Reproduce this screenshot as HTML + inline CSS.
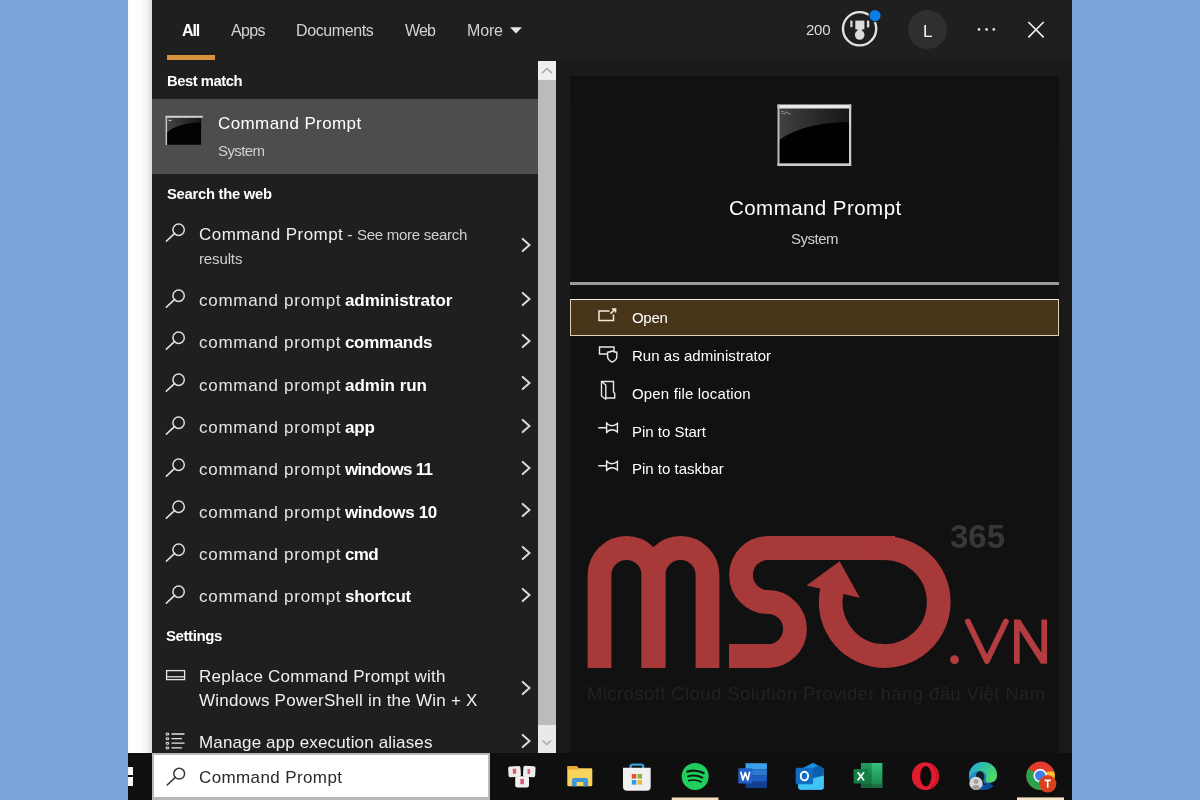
<!DOCTYPE html>
<html>
<head>
<meta charset="utf-8">
<title>Search</title>
<style>
*{margin:0;padding:0;box-sizing:border-box}
html,body{width:1200px;height:800px;overflow:hidden}
body{background:#7ba3da;font-family:"Liberation Sans",sans-serif;position:relative;color:#fff}
.abs{position:absolute}
.t{position:absolute;z-index:2;will-change:transform;white-space:nowrap;line-height:1;transform-origin:0 0}
#white{left:127.6px;top:0;width:24.4px;height:753.2px;background:linear-gradient(90deg,#f3f6fb 0,#fefefe 12%,#fdfdfd 55%,#f1f1f1 82%,#d9d9d9 100%)}
#panel{left:152px;top:0;width:919.8px;height:753.2px;background:#1f1f1f}
#rightbg{left:556px;top:56px;width:515.8px;height:697.2px;background:linear-gradient(180deg,#1f1f1f 0,#1a1a1a 8px,#191919 100%)}
#inner{left:570.3px;top:75.6px;width:488.6px;height:677.6px;background:#111111}
#taskbar{z-index:3;left:127.6px;top:753.2px;width:944.2px;height:46.8px;background:#0f0f0f}
#sel{left:152px;top:98.8px;width:385.6px;height:74.9px;background:#4d4d4d}
#sb{left:537.6px;top:61px;width:18.8px;height:692px;background:#bbbbbb}
#sbup{left:537.6px;top:61px;width:18.8px;height:19px;background:#eeeeee}
#sbdn{left:537.6px;top:725px;width:18.8px;height:28px;background:#e9e9e9}
#underline{left:167px;top:55px;width:48px;height:5px;background:#d8933a}
.tab{font-size:16px;color:#d0d0d0;top:22px}
.hd{font-size:15px;font-weight:bold;color:#fff}
.row{font-size:17px;color:#e6e6e6}
.row b{color:#fff}
.act{font-size:15px;color:#fff;left:632px}
#sep{left:570.3px;top:282.2px;width:488.6px;height:2.5px;background:#9a9a9a}
#openbtn{left:570.3px;top:299px;width:488.6px;height:37.3px;background:#483419;border:1px solid #ddd1b8;border-top-color:#ecebe6}
#search{z-index:3;left:152px;top:753px;width:338px;height:47px;background:#fff;border:2px solid #b9b9b9;border-bottom:3px solid #b9b9b9}
</style>
</head>
<body>
<div class="abs" id="white"></div>
<div class="abs" id="panel"></div>
<div class="abs" id="rightbg"></div>
<div class="abs" id="inner"></div>
<div class="abs" id="taskbar"></div>
<div class="abs" id="sel"></div>
<div class="abs" id="sb"></div>
<div class="abs" id="sbup"></div>
<div class="abs" id="sbdn"></div>
<div class="abs" id="underline"></div>
<div class="abs" id="sep"></div>
<div class="abs" id="openbtn"></div>
<div class="abs" id="search"></div>

<!-- MISC-START -->
<div class="t" style="left:181.7px;top:23.0px;font-size:16px;letter-spacing:-1.072px;font-weight:bold;color:#ffffff">All</div>
<div class="t" style="left:230.7px;top:23.0px;font-size:16px;letter-spacing:-0.623px;color:#d2d2d2">Apps</div>
<div class="t" style="left:296.0px;top:23.0px;font-size:16px;letter-spacing:-0.403px;color:#d2d2d2">Documents</div>
<div class="t" style="left:405.0px;top:23.0px;font-size:16px;letter-spacing:-0.805px;color:#d2d2d2">Web</div>
<div class="t" style="left:466.7px;top:23.0px;font-size:16px;letter-spacing:-0.152px;color:#d2d2d2">More</div>
<div class="t" style="left:166.5px;top:74.0px;font-size:14.8px;letter-spacing:-0.476px;font-weight:bold;color:#ffffff">Best match</div>
<div class="t" style="left:218.3px;top:115.0px;font-size:17px;letter-spacing:0.405px;color:#ffffff">Command Prompt</div>
<div class="t" style="left:218.3px;top:143.0px;font-size:15px;letter-spacing:-0.602px;color:#d0d0d0">System</div>
<div class="t" style="left:166.5px;top:187.0px;font-size:14.8px;letter-spacing:-0.275px;font-weight:bold;color:#ffffff">Search the web</div>
<div class="t" style="left:806.0px;top:22.0px;font-size:15px;letter-spacing:-0.264px;color:#dcdcdc">200</div>
<div class="t" style="left:923.4px;top:23.0px;font-size:17px;letter-spacing:0.000px;color:#f4f4f4">L</div>
<div class="t" style="left:728.7px;top:198.0px;font-size:20.5px;letter-spacing:0.451px;color:#ffffff">Command Prompt</div>
<div class="t" style="left:791.0px;top:231.0px;font-size:15px;letter-spacing:-0.482px;color:#cfcfcf">System</div>
<div class="t" style="left:631.6px;top:310.0px;font-size:15px;letter-spacing:-0.298px;color:#ffffff">Open</div>
<div class="t" style="left:631.6px;top:348.0px;font-size:15px;letter-spacing:0.037px;color:#ffffff">Run as administrator</div>
<div class="t" style="left:631.6px;top:386.0px;font-size:15px;letter-spacing:0.158px;color:#ffffff">Open file location</div>
<div class="t" style="left:631.6px;top:424.0px;font-size:15px;letter-spacing:-0.018px;color:#ffffff">Pin to Start</div>
<div class="t" style="left:631.6px;top:461.0px;font-size:15px;letter-spacing:0.006px;color:#ffffff">Pin to taskbar</div>
<div class="t" style="left:198.9px;top:769.0px;font-size:17px;letter-spacing:0.389px;color:#2a2a2a;z-index:4">Command Prompt</div>
<!-- MISC-END -->
<!-- LEFTROWS-START -->
<!-- row 0 -->
<div class="t" style="left:198.9px;top:226.0px;font-size:17px;letter-spacing:0.451px;color:#f0f0f0">Command Prompt</div>
<div class="t" style="left:346.7px;top:226.0px;font-size:17px;letter-spacing:0.000px;color:#d0d0d0">-</div>
<div class="t" style="left:357.3px;top:227.0px;font-size:15px;letter-spacing:-0.273px;color:#cfcfcf">See more search</div>
<div class="t" style="left:198.9px;top:251.0px;font-size:15px;letter-spacing:-0.130px;color:#cfcfcf">results</div>
<svg class="abs" style="left:164px;top:219.6px" width="24" height="24" viewBox="0 0 24 24"><circle cx="14.6" cy="9.7" r="5.7" fill="none" stroke="#e0e0e0" stroke-width="1.5"/><path d="M10.7 13.4L2.4 21.1" stroke="#e0e0e0" stroke-width="1.6" stroke-linecap="round"/></svg>
<svg class="abs" style="left:519px;top:236.3px" width="14" height="18" viewBox="0 0 14 18"><path d="M3.7 2.9L10.5 9L3.7 15.1" fill="none" stroke="#dadada" stroke-width="2" stroke-linecap="round"/></svg>
<!-- administrator -->
<div class="t" style="left:198.9px;top:292.0px;font-size:17px;letter-spacing:0.717px;color:#e4e4e4">command prompt</div>
<div class="t" style="left:345.3px;top:292.0px;font-size:17px;letter-spacing:-0.103px;font-weight:bold;color:#ffffff">administrator</div>
<svg class="abs" style="left:164px;top:285.6px" width="24" height="24" viewBox="0 0 24 24"><circle cx="14.6" cy="9.7" r="5.7" fill="none" stroke="#e0e0e0" stroke-width="1.5"/><path d="M10.7 13.4L2.4 21.1" stroke="#e0e0e0" stroke-width="1.6" stroke-linecap="round"/></svg>
<svg class="abs" style="left:519px;top:289.7px" width="14" height="18" viewBox="0 0 14 18"><path d="M3.7 2.9L10.5 9L3.7 15.1" fill="none" stroke="#dadada" stroke-width="2" stroke-linecap="round"/></svg>
<!-- commands -->
<div class="t" style="left:198.9px;top:334.0px;font-size:17px;letter-spacing:0.717px;color:#e4e4e4">command prompt</div>
<div class="t" style="left:345.3px;top:334.0px;font-size:17px;letter-spacing:-0.336px;font-weight:bold;color:#ffffff">commands</div>
<svg class="abs" style="left:164px;top:327.9px" width="24" height="24" viewBox="0 0 24 24"><circle cx="14.6" cy="9.7" r="5.7" fill="none" stroke="#e0e0e0" stroke-width="1.5"/><path d="M10.7 13.4L2.4 21.1" stroke="#e0e0e0" stroke-width="1.6" stroke-linecap="round"/></svg>
<svg class="abs" style="left:519px;top:332.0px" width="14" height="18" viewBox="0 0 14 18"><path d="M3.7 2.9L10.5 9L3.7 15.1" fill="none" stroke="#dadada" stroke-width="2" stroke-linecap="round"/></svg>
<!-- admin run -->
<div class="t" style="left:198.9px;top:377.0px;font-size:17px;letter-spacing:0.717px;color:#e4e4e4">command prompt</div>
<div class="t" style="left:345.3px;top:377.0px;font-size:17px;letter-spacing:-0.021px;font-weight:bold;color:#ffffff">admin run</div>
<svg class="abs" style="left:164px;top:370.3px" width="24" height="24" viewBox="0 0 24 24"><circle cx="14.6" cy="9.7" r="5.7" fill="none" stroke="#e0e0e0" stroke-width="1.5"/><path d="M10.7 13.4L2.4 21.1" stroke="#e0e0e0" stroke-width="1.6" stroke-linecap="round"/></svg>
<svg class="abs" style="left:519px;top:374.4px" width="14" height="18" viewBox="0 0 14 18"><path d="M3.7 2.9L10.5 9L3.7 15.1" fill="none" stroke="#dadada" stroke-width="2" stroke-linecap="round"/></svg>
<!-- app -->
<div class="t" style="left:198.9px;top:419.0px;font-size:17px;letter-spacing:0.717px;color:#e4e4e4">command prompt</div>
<div class="t" style="left:345.3px;top:419.0px;font-size:17px;letter-spacing:-0.112px;font-weight:bold;color:#ffffff">app</div>
<svg class="abs" style="left:164px;top:412.6px" width="24" height="24" viewBox="0 0 24 24"><circle cx="14.6" cy="9.7" r="5.7" fill="none" stroke="#e0e0e0" stroke-width="1.5"/><path d="M10.7 13.4L2.4 21.1" stroke="#e0e0e0" stroke-width="1.6" stroke-linecap="round"/></svg>
<svg class="abs" style="left:519px;top:416.7px" width="14" height="18" viewBox="0 0 14 18"><path d="M3.7 2.9L10.5 9L3.7 15.1" fill="none" stroke="#dadada" stroke-width="2" stroke-linecap="round"/></svg>
<!-- windows 11 -->
<div class="t" style="left:198.9px;top:461.0px;font-size:17px;letter-spacing:0.717px;color:#e4e4e4">command prompt</div>
<div class="t" style="left:345.3px;top:461.0px;font-size:17px;letter-spacing:-0.719px;font-weight:bold;color:#ffffff">windows 11</div>
<svg class="abs" style="left:164px;top:454.9px" width="24" height="24" viewBox="0 0 24 24"><circle cx="14.6" cy="9.7" r="5.7" fill="none" stroke="#e0e0e0" stroke-width="1.5"/><path d="M10.7 13.4L2.4 21.1" stroke="#e0e0e0" stroke-width="1.6" stroke-linecap="round"/></svg>
<svg class="abs" style="left:519px;top:459.0px" width="14" height="18" viewBox="0 0 14 18"><path d="M3.7 2.9L10.5 9L3.7 15.1" fill="none" stroke="#dadada" stroke-width="2" stroke-linecap="round"/></svg>
<!-- windows 10 -->
<div class="t" style="left:198.9px;top:504.0px;font-size:17px;letter-spacing:0.717px;color:#e4e4e4">command prompt</div>
<div class="t" style="left:345.3px;top:504.0px;font-size:17px;letter-spacing:-0.357px;font-weight:bold;color:#ffffff">windows 10</div>
<svg class="abs" style="left:164px;top:497.3px" width="24" height="24" viewBox="0 0 24 24"><circle cx="14.6" cy="9.7" r="5.7" fill="none" stroke="#e0e0e0" stroke-width="1.5"/><path d="M10.7 13.4L2.4 21.1" stroke="#e0e0e0" stroke-width="1.6" stroke-linecap="round"/></svg>
<svg class="abs" style="left:519px;top:501.4px" width="14" height="18" viewBox="0 0 14 18"><path d="M3.7 2.9L10.5 9L3.7 15.1" fill="none" stroke="#dadada" stroke-width="2" stroke-linecap="round"/></svg>
<!-- cmd -->
<div class="t" style="left:198.9px;top:546.0px;font-size:17px;letter-spacing:0.717px;color:#e4e4e4">command prompt</div>
<div class="t" style="left:345.3px;top:546.0px;font-size:17px;letter-spacing:-0.627px;font-weight:bold;color:#ffffff">cmd</div>
<svg class="abs" style="left:164px;top:539.6px" width="24" height="24" viewBox="0 0 24 24"><circle cx="14.6" cy="9.7" r="5.7" fill="none" stroke="#e0e0e0" stroke-width="1.5"/><path d="M10.7 13.4L2.4 21.1" stroke="#e0e0e0" stroke-width="1.6" stroke-linecap="round"/></svg>
<svg class="abs" style="left:519px;top:543.7px" width="14" height="18" viewBox="0 0 14 18"><path d="M3.7 2.9L10.5 9L3.7 15.1" fill="none" stroke="#dadada" stroke-width="2" stroke-linecap="round"/></svg>
<!-- shortcut -->
<div class="t" style="left:198.9px;top:588.0px;font-size:17px;letter-spacing:0.717px;color:#e4e4e4">command prompt</div>
<div class="t" style="left:345.3px;top:588.0px;font-size:17px;letter-spacing:-0.258px;font-weight:bold;color:#ffffff">shortcut</div>
<svg class="abs" style="left:164px;top:581.9px" width="24" height="24" viewBox="0 0 24 24"><circle cx="14.6" cy="9.7" r="5.7" fill="none" stroke="#e0e0e0" stroke-width="1.5"/><path d="M10.7 13.4L2.4 21.1" stroke="#e0e0e0" stroke-width="1.6" stroke-linecap="round"/></svg>
<svg class="abs" style="left:519px;top:586.0px" width="14" height="18" viewBox="0 0 14 18"><path d="M3.7 2.9L10.5 9L3.7 15.1" fill="none" stroke="#dadada" stroke-width="2" stroke-linecap="round"/></svg>
<!-- settings -->
<div class="t" style="left:166.0px;top:628.0px;font-size:15px;letter-spacing:-0.411px;font-weight:bold;color:#ffffff">Settings</div>
<div class="t" style="left:198.9px;top:668.0px;font-size:17px;letter-spacing:0.247px;color:#f0f0f0">Replace Command Prompt with</div>
<div class="t" style="left:198.9px;top:692.0px;font-size:17px;letter-spacing:0.241px;color:#f0f0f0">Windows PowerShell in the Win + X</div>
<svg class="abs" style="left:519px;top:678.5px" width="14" height="18" viewBox="0 0 14 18"><path d="M3.7 2.9L10.5 9L3.7 15.1" fill="none" stroke="#dadada" stroke-width="2" stroke-linecap="round"/></svg>
<div class="t" style="left:198.9px;top:734.0px;font-size:17px;letter-spacing:0.138px;color:#f0f0f0">Manage app execution aliases</div>
<svg class="abs" style="left:519px;top:732.2px" width="14" height="18" viewBox="0 0 14 18"><path d="M3.7 2.9L10.5 9L3.7 15.1" fill="none" stroke="#dadada" stroke-width="2" stroke-linecap="round"/></svg>
<!-- LEFTROWS-END -->
<!-- ICONS -->
<!-- more caret -->
<svg class="abs" style="left:509px;top:26px" width="14" height="9" viewBox="0 0 14 9"><path d="M1 1.3H13L7 7.6Z" fill="#e6e6e6"/></svg>
<!-- small cmd icon -->
<svg class="abs" style="left:165.3px;top:115.3px" width="40" height="33" viewBox="0 0 40 33">
<defs><linearGradient id="g1" x1="0" y1="0" x2="1" y2="0"><stop offset="0" stop-color="#444"/><stop offset="1" stop-color="#161616"/></linearGradient></defs>
<rect x="1.5" y="1.5" width="34.6" height="28.2" fill="#020202"/>
<path d="M1.5 2H36.1V7.6C22 8 8 11 1.5 18Z" fill="url(#g1)"/>
<rect x="0.6" y="0.8" width="37.1" height="2" fill="#d2d2d2"/>
<rect x="0.6" y="0.8" width="1.5" height="29.2" fill="#c2c2c2"/>
<rect x="3.5" y="4.8" width="3" height="1" fill="#ddd"/>
</svg>
<!-- large cmd icon -->
<svg class="abs" style="left:777px;top:104px" width="76" height="64" viewBox="0 0 76 64">
<defs><linearGradient id="g2" x1="0" y1="0" x2="1" y2="0"><stop offset="0" stop-color="#424242"/><stop offset="0.6" stop-color="#262626"/><stop offset="1" stop-color="#161616"/></linearGradient></defs>
<rect x="1" y="1" width="73" height="60.5" fill="#010101"/>
<path d="M1 3H74V18.2C52 18 22 21 1 37Z" fill="url(#g2)"/>
<rect x="0.5" y="0.5" width="73.7" height="4" fill="#e9e9e9"/>
<rect x="0.5" y="0.5" width="2" height="61.5" fill="#bdbdbd"/>
<rect x="72" y="0.5" width="2.2" height="61.5" fill="#cfcfcf"/>
<rect x="0.5" y="59.3" width="73.7" height="2.7" fill="#c9c9c9"/>
<path d="M4.5 7.5h2M4.5 9.5h2M7.5 10.5l1.5-3M9.5 8l4 2.5" stroke="#9a9a9a" stroke-width="1" fill="none"/>
</svg>
<!-- trophy / rewards -->
<svg class="abs" style="left:838px;top:7px" width="46" height="44" viewBox="0 0 46 44">
<circle cx="21.6" cy="21.75" r="16.6" fill="none" stroke="#e2e2e2" stroke-width="2.4"/>
<rect x="17.3" y="13.6" width="9.1" height="8.8" fill="#dcdcdc"/>
<rect x="12.3" y="13.6" width="2.2" height="6.6" fill="#dcdcdc"/>
<rect x="28.9" y="13.6" width="2.4" height="6.8" fill="#dcdcdc"/>
<rect x="19.6" y="22" width="4.4" height="3" fill="#dcdcdc"/>
<circle cx="21.7" cy="28" r="4.8" fill="#dcdcdc"/>
<circle cx="37" cy="8.6" r="6.6" fill="#1f1f1f"/>
<circle cx="37" cy="8.6" r="5.6" fill="#0c7ce6"/>
</svg>
<!-- L avatar -->
<div class="abs" style="left:908px;top:10px;width:39px;height:39px;border-radius:50%;background:#2f2f2f"></div>
<!-- dots -->
<svg class="abs" style="left:975px;top:26px" width="24" height="8" viewBox="0 0 24 8"><circle cx="4" cy="3.4" r="1.35" fill="#e6e6e6"/><circle cx="11.6" cy="3.4" r="1.35" fill="#e6e6e6"/><circle cx="18.8" cy="3.4" r="1.35" fill="#e6e6e6"/></svg>
<!-- close X -->
<svg class="abs" style="left:1026px;top:20px" width="20" height="20" viewBox="0 0 20 20"><path d="M2.3 2L17.7 17.4M17.7 2L2.3 17.4" stroke="#ececec" stroke-width="1.7" fill="none"/></svg>
<!-- scrollbar arrows -->
<svg class="abs" style="left:540px;top:65px" width="14" height="12" viewBox="0 0 14 12"><path d="M2.2 8L7 3.6L11.8 8" fill="none" stroke="#9d9d9d" stroke-width="1.4"/></svg>
<svg class="abs" style="left:540px;top:737px" width="14" height="12" viewBox="0 0 14 12"><path d="M2.6 3.6L6.8 7.6L11 3.6" fill="none" stroke="#a6a6a6" stroke-width="1.4"/></svg>
<!-- action icons -->
<svg class="abs" style="left:596px;top:306px" width="24" height="18" viewBox="0 0 24 18"><path d="M13.5 5H3V14.6H17.5V8.6" fill="none" stroke="#f3e9dc" stroke-width="1.5"/><path d="M14.5 7.6L19.4 3.1M15.9 2.9H19.6V6.6" fill="none" stroke="#f3e9dc" stroke-width="1.5"/></svg>
<svg class="abs" style="left:596px;top:344px" width="24" height="22" viewBox="0 0 24 22"><path d="M18 7V3H3.5V10H11" fill="none" stroke="#e8e8e8" stroke-width="1.4"/><path d="M11.6 8.2C13.6 8.2 15 7.6 16.2 7C17.4 7.6 18.8 8.2 20.8 8.2V12.5C20.8 15 18.6 17 16.2 18C13.8 17 11.6 15 11.6 12.5Z" fill="none" stroke="#e8e8e8" stroke-width="1.4"/></svg>
<svg class="abs" style="left:598px;top:378px" width="20" height="24" viewBox="0 0 20 24"><path d="M3.5 3.5H15.5V14L16.7 15.2V20H8" fill="none" stroke="#e8e8e8" stroke-width="1.4"/><path d="M3.5 3.5L7.8 7V21.3L3.5 18Z" fill="none" stroke="#e8e8e8" stroke-width="1.4" stroke-linejoin="round"/></svg>
<svg class="abs" style="left:596px;top:418px" width="24" height="18" viewBox="0 0 24 18"><path d="M2.3 9.7H10.6M10.6 4.2V15.3M10.6 4.9C12.3 7.3 14 7.7 16 7.7C18 7.7 19.6 7 21.4 5.4V14.1C19.6 12.5 18 11.8 16 11.8C14 11.8 12.3 12.2 10.6 14.6" fill="none" stroke="#ececec" stroke-width="1.4"/></svg>
<svg class="abs" style="left:596px;top:455.6px" width="24" height="18" viewBox="0 0 24 18"><path d="M2.3 9.7H10.6M10.6 4.2V15.3M10.6 4.9C12.3 7.3 14 7.7 16 7.7C18 7.7 19.6 7 21.4 5.4V14.1C19.6 12.5 18 11.8 16 11.8C14 11.8 12.3 12.2 10.6 14.6" fill="none" stroke="#ececec" stroke-width="1.4"/></svg>
<!-- settings row icons -->
<svg class="abs" style="left:165px;top:668px" width="22" height="14" viewBox="0 0 22 14"><rect x="1.6" y="2.6" width="18" height="9" fill="none" stroke="#e4e4e4" stroke-width="1.3"/><path d="M1.6 8.8H19.6" stroke="#e4e4e4" stroke-width="1.3"/></svg>
<svg class="abs" style="left:165px;top:731px" width="22" height="20" viewBox="0 0 22 20"><path d="M6.5 3H19.5M6.5 7.6H17M6.5 12.2H19.5M6.5 16.8H17" stroke="#e4e4e4" stroke-width="1.3"/><path d="M1.2 2.2h2.4v1.8h-2.4zM1.2 6.8h2.4v1.8h-2.4zM1.2 11.4h2.4v1.8h-2.4zM1.2 16h2.4v1.8h-2.4z" fill="none" stroke="#e4e4e4" stroke-width="1"/></svg>
<!-- search box icon -->
<svg class="abs" style="z-index:4;left:164.7px;top:764.4px" width="24" height="24" viewBox="0 0 24 24"><circle cx="14.2" cy="9.7" r="5.4" fill="none" stroke="#3a3a3a" stroke-width="1.5"/><path d="M10.3 13.4L2.2 21" stroke="#3a3a3a" stroke-width="1.6" stroke-linecap="round"/></svg>
<!-- windows logo sliver -->
<div class="abs" style="z-index:4;left:127.6px;top:766.9px;width:5.8px;height:8.3px;background:#f6f6f6"></div>
<div class="abs" style="z-index:4;left:127.6px;top:776.6px;width:5.8px;height:9.2px;background:#f6f6f6"></div>
<!-- LOGO -->
<svg class="abs" style="left:570px;top:500px" width="489" height="230" viewBox="570 500 489 230">
<g fill="none" stroke="#a83939" stroke-width="23.8">
<path d="M599.5 668V575A27 27 0 0 1 653.5 575V668"/>
<path d="M653.5 668V575A27 27 0 0 1 707.5 575V668"/>
<path d="M895 548H768A27 27 0 0 0 768 602A27 27 0 0 1 768 656H729"/>
<path d="M878 548.45A54 54 0 1 1 832.3 589"/>
</g>
<path d="M839.6 561.2L806.5 585.4L859.8 597.8Z" fill="#a83939"/>
<circle cx="954.5" cy="659.7" r="4.4" fill="#b23c40"/>
<path d="M967.9 621.4L986.9 661.1L1005.9 621.4" fill="none" stroke="#b23c40" stroke-width="5.8" stroke-linecap="round" stroke-linejoin="round"/>
<path d="M1014 619.8Q1014 619.4 1014.4 619.4H1020.2L1041.4 652.8V619.4H1047.1V663.8H1040.9L1019.7 630.4V663.8H1014Z" fill="#b23c40"/>
</svg>
<div class="t" style="left:949.5px;top:519.5px;font-size:33px;font-weight:bold;color:#373737;letter-spacing:0px">365</div>
<div class="t" style="left:587px;top:685px;font-size:18.5px;color:#222222;letter-spacing:0.41px">Microsoft Cloud Solution Provider hàng đầu Việt Nam</div>
<!-- TASKBAR ICONS -->
<svg class="abs" style="z-index:4;left:490px;top:753px" width="582" height="47" viewBox="490 753 582 47">
<!-- keys icon -->
<g>
<rect x="508.3" y="766.3" width="12.4" height="10.8" rx="1.8" fill="#ececec" transform="rotate(-3 514 771)"/>
<rect x="523.2" y="766" width="12.2" height="11" rx="1.8" fill="#ededed" transform="rotate(3 529 771)"/>
<rect x="515.2" y="776.2" width="13.8" height="11.2" rx="1.8" fill="#f1f1f1"/>
<rect x="512.8" y="768.8" width="3.4" height="5" fill="#e0566a"/>
<rect x="527.5" y="769" width="2.6" height="5" fill="#e0677a"/>
<rect x="520.3" y="779" width="3.6" height="5.2" fill="#de5a6e"/>
</g>
<!-- folder -->
<g>
<path d="M567.3 767.3Q567.3 766 568.6 766H576.6L578.6 768.2H591Q592.3 768.2 592.3 769.5V785Q592.3 786.3 591 786.3H568.6Q567.3 786.3 567.3 785Z" fill="#f7d25c"/>
<path d="M567.3 767.3Q567.3 766 568.6 766H576.6L578.6 768.2L577.6 769.6H567.3Z" fill="#e7a92f"/>
<path d="M572 786.3V780Q572 778 574 778H586Q588 778 588 780V786.3H583.4V782H576.6V786.3Z" fill="#3f95d6"/>
</g>
<!-- store -->
<g>
<path d="M630.6 769V766.6Q630.6 764.6 632.6 764.6H641.2Q643.2 764.6 643.2 766.6V769" fill="none" stroke="#3b9ad8" stroke-width="2.4"/>
<path d="M623 767.8H650.7V786.7Q650.7 790.7 646.7 790.7H627Q623 790.7 623 786.7Z" fill="#f0f0f0"/>
<rect x="631.8" y="774" width="4.5" height="4.6" fill="#e8502a"/>
<rect x="637.5" y="774" width="4.5" height="4.6" fill="#7bb83c"/>
<rect x="631.8" y="780" width="4.5" height="4.6" fill="#2e9bdc"/>
<rect x="637.5" y="780" width="4.5" height="4.6" fill="#f3b32c"/>
</g>
<!-- spotify -->
<g>
<circle cx="695.2" cy="776.4" r="13.5" fill="#1fce5c"/>
<path d="M687.3 771.6Q695.5 769 703.6 773" fill="none" stroke="#0f1a12" stroke-width="2.3" stroke-linecap="round"/>
<path d="M688 776.3Q695.4 774.2 702.4 777.6" fill="none" stroke="#0f1a12" stroke-width="1.9" stroke-linecap="round"/>
<path d="M688.8 780.6Q695.2 779 701 781.8" fill="none" stroke="#0f1a12" stroke-width="1.6" stroke-linecap="round"/>
<rect x="671.7" y="797.5" width="46.8" height="2.5" fill="#f6dec2"/>
</g>
<!-- word -->
<g>
<rect x="745.5" y="763.2" width="21.4" height="6.3" fill="#3d9fea"/>
<rect x="745.5" y="769.4" width="21.4" height="6.3" fill="#2a7ad2"/>
<rect x="745.5" y="775.6" width="21.4" height="6.3" fill="#1a5dbe"/>
<rect x="745.5" y="781.8" width="21.4" height="6.3" fill="#123f92"/>
<rect x="738.3" y="768.2" width="14" height="15.3" rx="1.2" fill="#2360c5"/>
<path d="M740.8 771.8L742.9 780L745.3 772.6L747.7 780L749.8 771.8" fill="none" stroke="#fff" stroke-width="1.7" stroke-linejoin="round"/>
</g>
<!-- outlook -->
<g>
<path d="M803 768L813 762.8L823.8 768.5V787Q823.8 789.8 821 789.8H801Q798.2 789.8 798.2 787V782Z" fill="#1c8fe0"/>
<path d="M812.5 768L819 765.5L823.8 768.5V776L812.5 779Z" fill="#0b5fae"/>
<path d="M798.2 782L823.8 775.5V787Q823.8 789.8 821 789.8H801Q798.2 789.8 798.2 787Z" fill="#3fc4f4"/>
<rect x="795.7" y="767.7" width="17.3" height="16.6" rx="1.4" fill="#0f6dc4"/>
<ellipse cx="804.4" cy="776" rx="3.7" ry="4.3" fill="none" stroke="#fff" stroke-width="1.9"/>
</g>
<!-- excel -->
<g>
<defs><linearGradient id="xg1" x1="0" y1="0" x2="0" y2="1"><stop offset="0" stop-color="#34c07e"/><stop offset="0.55" stop-color="#21a060"/><stop offset="1" stop-color="#197a45"/></linearGradient>
<linearGradient id="xg2" x1="0" y1="0" x2="0" y2="1"><stop offset="0" stop-color="#249f62"/><stop offset="0.5" stop-color="#15803f"/><stop offset="1" stop-color="#17693a"/></linearGradient></defs>
<rect x="861" y="763" width="11" height="25" fill="url(#xg2)"/>
<rect x="871.7" y="763" width="10.7" height="25" fill="url(#xg1)"/>
<rect x="861" y="784.5" width="21.4" height="3.5" fill="#185c37" opacity="0.55"/>
<rect x="853.6" y="769" width="14.4" height="14.4" rx="1.2" fill="#137c43"/>
<path d="M857.6 772.2L864 780.4M864 772.2L857.6 780.4" stroke="#e9f7ee" stroke-width="1.8"/>
</g>
<!-- opera -->
<g>
<ellipse cx="925.5" cy="776.2" rx="13.6" ry="14" fill="#e11b30"/>
<ellipse cx="925.8" cy="776.2" rx="5.6" ry="10.2" fill="#12090a"/>
<path d="M931 764.5Q937 769 937 776.2Q937 783.5 931 788" fill="none" stroke="#a80f22" stroke-width="1.2" opacity="0.6"/>
</g>
<!-- edge -->
<g>
<defs>
<linearGradient id="eg1" x1="0" y1="0" x2="1" y2="1"><stop offset="0" stop-color="#2aa6e6"/><stop offset="1" stop-color="#0d4f9e"/></linearGradient>
<linearGradient id="eg2" x1="0" y1="0" x2="1" y2="0.6"><stop offset="0" stop-color="#27a3e0"/><stop offset="0.55" stop-color="#35c39a"/><stop offset="1" stop-color="#52d860"/></linearGradient>
</defs>
<circle cx="983" cy="776" r="14" fill="url(#eg1)"/>
<path d="M969.2 773.5C970.5 766.5 976 762 983 762C991.5 762 997 768 997 775C997 780 993.5 782.6 989.5 782.6C986 782.6 984.6 781 985.5 779.4C987.4 776.3 985.5 771 979.5 771C974.5 771 970.5 773.8 969.2 777.5Z" fill="url(#eg2)"/>
<path d="M985.6 778.2C984 781.5 987 784 990.5 783.6C994 783.3 996 781.4 996.8 779.5C995 786 989.8 790 983.4 790C980.5 790 978.3 789.3 977 788.4C983 789 986.5 784 985.6 778.2Z" fill="#0c4c97"/>
<path d="M979.6 771C976.5 771.7 975.3 775 976.6 778.4C978 781.8 981 784.6 986 784.9C983.8 783.6 982.6 781.6 983.6 779.5C985 776 984 771.2 979.6 771Z" fill="#111" opacity="0.85"/>
<path d="M997.6 777.5C998 781 996.5 784.5 994 787C993.5 785 991.5 784 988.8 783.9C992.5 783.2 996 781 997.6 777.5Z" fill="#0e0e0e"/>
<circle cx="976" cy="783.4" r="6.6" fill="#d6d6d6"/>
<circle cx="976" cy="781.5" r="2.3" fill="#a59a96"/>
<path d="M971.6 787.2Q976 782.6 980.4 787.2Q978.5 789.6 976 789.7Q973.5 789.6 971.6 787.2Z" fill="#a59a96"/>
</g>
<!-- chrome -->
<g>
<circle cx="1040.6" cy="775.8" r="14.2" fill="#e33b2e"/>
<path d="M1040.6 775.8L1028.3 768.7A14.2 14.2 0 0 0 1040.9 790L1047.5 779.6Z" fill="#2ba24c"/>
<path d="M1040.6 775.8L1047.8 771.6H1054.2A14.2 14.2 0 0 1 1040.9 790Z" fill="#f5c12c"/>
<circle cx="1040.2" cy="775.6" r="6.8" fill="#f4f4f4"/>
<circle cx="1040.2" cy="775.6" r="5.2" fill="#3f7fe8"/>
<circle cx="1047.7" cy="783.8" r="8.7" fill="#d7411c"/>
<path d="M1044.6 780.4H1050.8M1047.7 780.4V787.8" stroke="#fff" stroke-width="1.6"/>
<rect x="1017" y="797.4" width="47" height="2.6" fill="#f6e6c8"/>
</g>
</svg>
</body>
</html>
